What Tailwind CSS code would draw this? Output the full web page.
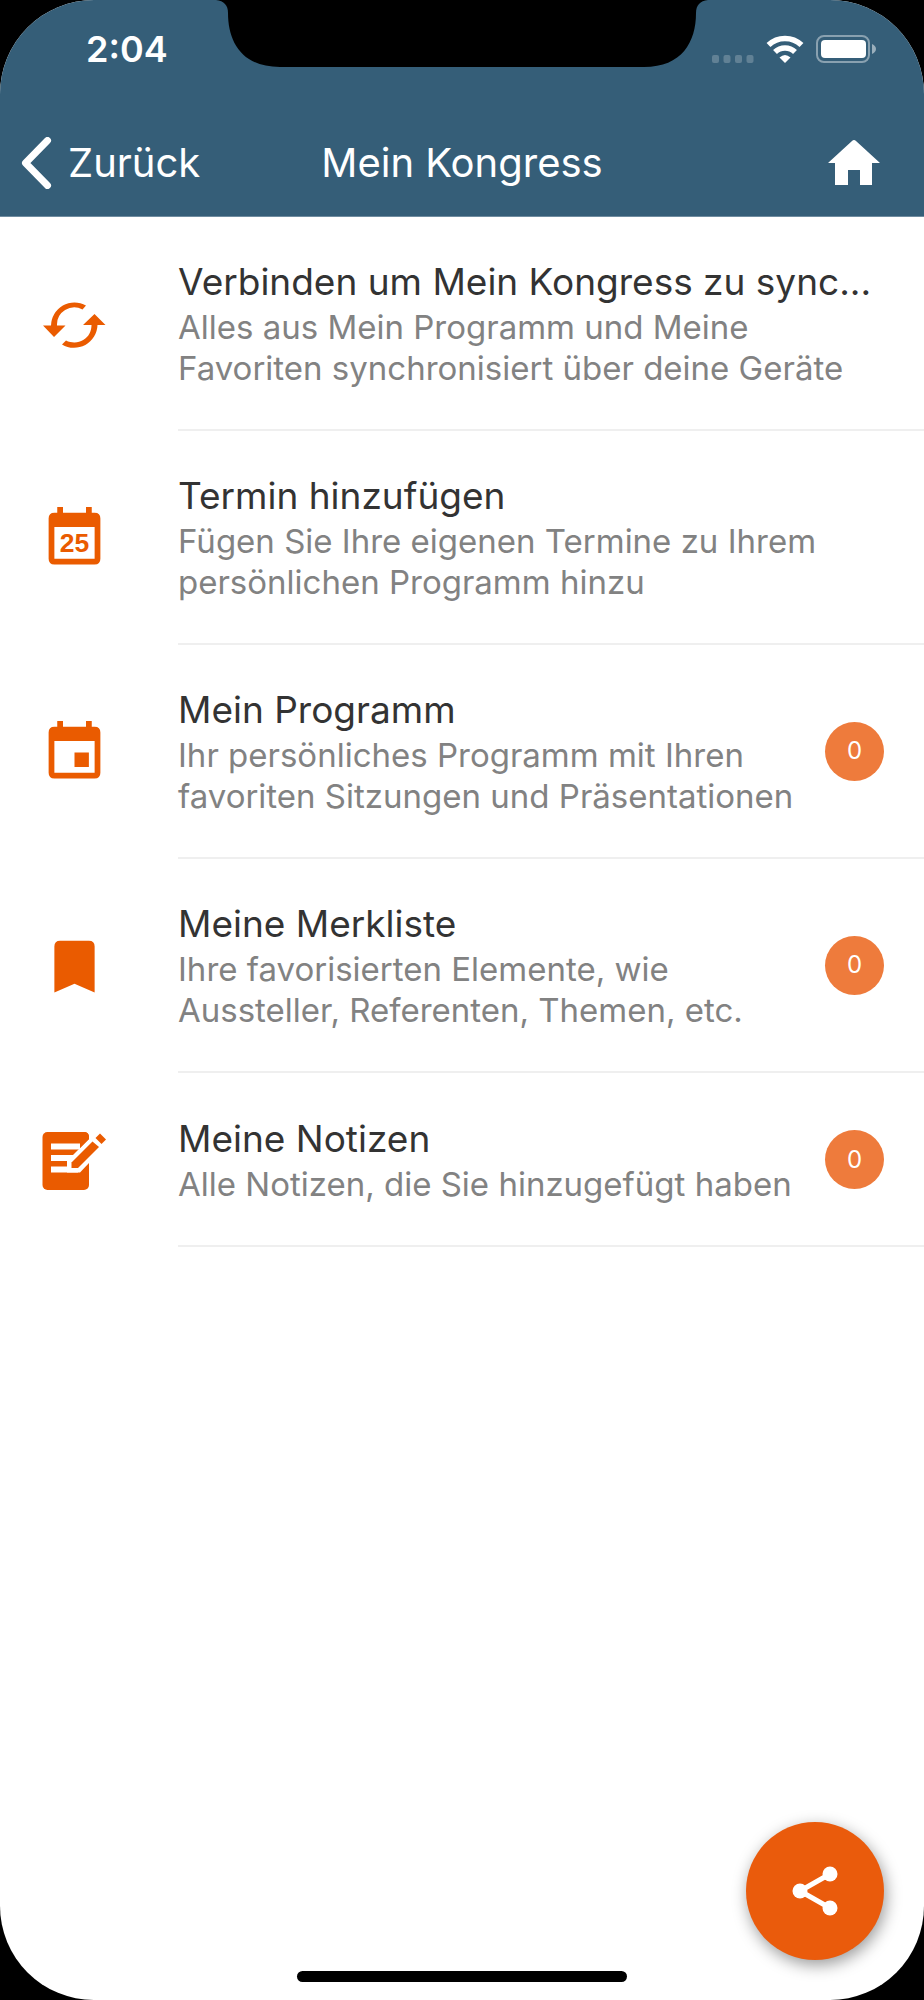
<!DOCTYPE html>
<html lang="de">
<head>
<meta charset="utf-8">
<meta name="viewport" content="width=device-width, initial-scale=1">
<title>Mein Kongress</title>
<script src="https://cdn.jsdelivr.net/npm/@tailwindcss/browser@4"></script>
</head>
<body class="bg-black font-['Inter',sans-serif]">
<div class="relative flex min-h-screen flex-col overflow-hidden rounded-[94px] bg-white">

  <!-- Device notch -->
  <svg class="absolute top-0 left-1/2 h-[68px] w-[492px] -translate-x-1/2" viewBox="0 0 492 68" aria-hidden="true"><path d="M0 0C8 1 12 5 12 13C12 42 26 67 64 67H428C466 67 480 42 480 13C480 5 484 1 492 0Z" fill="#000"/></svg>

  <header class="border-b border-[#6f8ca0] bg-[#355e78] text-white">
    <div class="flex h-[98px] items-center justify-between pr-12 pl-[86px]">
      <time class="text-[36px] leading-[44px] font-semibold">2:04</time>
      <div class="flex items-center gap-3">
        <svg class="h-7 w-[42px]" viewBox="0 0 42 28" fill="#fff" fill-opacity=".22" aria-hidden="true"><rect y="20" width="7" height="8" rx="2"/><rect x="11.500" y="20" width="7" height="8" rx="2"/><rect x="23" y="20" width="7" height="8" rx="2"/><rect x="34.500" y="20" width="7" height="8" rx="2"/></svg>
        <svg class="h-7 w-[38px]" viewBox="0 0 38 28" fill="none" stroke="#fff" stroke-width="5.600" aria-label="WLAN" role="img"><path d="M2.500 10A24 24 0 0 1 35.500 10"/><path d="M9 17A14.500 14.500 0 0 1 29 17"/><path d="M13.500 22.500Q19 17.500 24.500 22.500L19 28Z" fill="#fff" stroke="none"/></svg>
        <svg class="h-7 w-[60px]" viewBox="0 0 60 28" aria-label="Batterie" role="img"><rect x="1" y="1" width="52" height="26" rx="7" fill="none" stroke="#fff" stroke-opacity=".42" stroke-width="2"/><rect x="5" y="5" width="45" height="18" rx="4" fill="#fff"/><path d="M56 9Q60 11 60 14T56 19Z" fill="#fff" fill-opacity=".5"/></svg>
      </div>
    </div>
    <nav class="grid h-[118px] grid-cols-[1fr_auto_1fr] items-center px-[21px] pt-3">
      <a href="#" class="flex items-center gap-4 text-[40px] leading-[48px]">
        <svg class="h-[52px] w-[31px]" viewBox="0 0 31 52" fill="none" stroke="#fff" stroke-width="7" stroke-linecap="round" stroke-linejoin="round" aria-hidden="true"><path d="M26.500 3.500L4.500 26L26.500 48.500"/></svg>
        Zurück
      </a>
      <h1 class="text-[40px] leading-[48px]">Mein Kongress</h1>
      <a href="#" class="mr-[22px] justify-self-end" aria-label="Startseite">
        <svg class="h-[46px] w-[54px]" viewBox="0 0 54 46" fill="#fff" aria-hidden="true"><path d="M27 0Q28 0 29 1L53 23H45V45H33V30H21V45H8V23H1L25 1Q26 0 27 0Z"/></svg>
      </a>
    </nav>
  </header>

  <main class="flex-1">
    <ul class="text-[#828282]">
      <li><a href="#" class="flex">
        <span class="flex w-[178px] shrink-0 items-center pl-10">
          <svg class="size-[69px]" viewBox="0 0 69 69" fill="#ea5b00" aria-hidden="true"><path d="M46 15.500A23.500 23.500 0 0 0 11 35.500H3L14 47L25.500 35.500H17A17.300 17.300 0 0 1 42.500 19.500Z"/><path d="M22 54.500A23.500 23.500 0 0 0 57.500 35H65.500L54.500 24L43 35H51.500A17.300 17.300 0 0 1 26 50.500Z"/></svg>
        </span>
        <span class="min-w-0 flex-1 border-b-2 border-[#efefef] pt-10 pr-10 pb-10">
          <span class="block text-[37px] leading-[50px] whitespace-nowrap text-[#333]">Verbinden um Mein Kongress zu sync...</span>
          <span class="block text-[33px] leading-[41px]">Alles aus Mein Programm und Meine<br>Favoriten synchronisiert über deine Geräte</span>
        </span>
      </a></li>

      <li><a href="#" class="flex">
        <span class="flex w-[178px] shrink-0 items-center pl-10">
          <svg class="size-[69px]" viewBox="0 0 24 24" fill="#ea5b00" aria-hidden="true"><path fill-rule="evenodd" d="M6 1H8V3H16V1H18V3H19Q21 3 21 5V19Q21 21 19 21H5Q3 21 3 19V5Q3 3 5 3H6ZM5 8V19H19V8Z"/><text x="12" y="16.700" text-anchor="middle" font-family="Liberation Sans" font-weight="bold" font-size="9.200">25</text></svg>
        </span>
        <span class="min-w-0 flex-1 border-b-2 border-[#efefef] pt-10 pr-10 pb-10">
          <span class="block text-[37px] leading-[50px] whitespace-nowrap text-[#333]">Termin hinzufügen</span>
          <span class="block text-[33px] leading-[41px]">Fügen Sie Ihre eigenen Termine zu Ihrem<br>persönlichen Programm hinzu</span>
        </span>
      </a></li>

      <li><a href="#" class="flex">
        <span class="flex w-[178px] shrink-0 items-center pl-10">
          <svg class="size-[69px]" viewBox="0 0 24 24" fill="#ea5b00" aria-hidden="true"><path fill-rule="evenodd" d="M6 1H8V3H16V1H18V3H19Q21 3 21 5V19Q21 21 19 21H5Q3 21 3 19V5Q3 3 5 3H6ZM5 8V19H19V8ZM12 12H17V17H12Z"/></svg>
        </span>
        <span class="flex min-w-0 flex-1 items-center border-b-2 border-[#efefef] pt-10 pr-10 pb-10">
          <span class="min-w-0 flex-1">
            <span class="block text-[37px] leading-[50px] whitespace-nowrap text-[#333]">Mein Programm</span>
            <span class="block text-[33px] leading-[41px] whitespace-nowrap">Ihr persönliches Programm mit Ihren<br>favoriten Sitzungen und Präsentationen</span>
          </span>
          <span class="flex size-[59px] shrink-0 items-center justify-center rounded-full bg-[#ee7b3c] text-2xl text-white">0</span>
        </span>
      </a></li>

      <li><a href="#" class="flex">
        <span class="flex w-[178px] shrink-0 items-center pl-10">
          <svg class="size-[69px]" viewBox="0 0 24 24" fill="#ea5b00" aria-hidden="true"><path d="M17 3H7Q5 3 5 5V21L12 18L19 21V5Q19 3 17 3Z"/></svg>
        </span>
        <span class="flex min-w-0 flex-1 items-center border-b-2 border-[#efefef] pt-10 pr-10 pb-10">
          <span class="min-w-0 flex-1">
            <span class="block text-[37px] leading-[50px] whitespace-nowrap text-[#333]">Meine Merkliste</span>
            <span class="block text-[33px] leading-[41px] whitespace-nowrap">Ihre favorisierten Elemente, wie<br>Aussteller, Referenten, Themen, etc.</span>
          </span>
          <span class="flex size-[59px] shrink-0 items-center justify-center rounded-full bg-[#ee7b3c] text-2xl text-white">0</span>
        </span>
      </a></li>

      <li><a href="#" class="flex">
        <span class="flex w-[178px] shrink-0 items-center pl-10">
          <svg class="size-[69px]" viewBox="0 0 69 69" aria-hidden="true"><rect x="2.500" y="6" width="46.500" height="58" rx="5" fill="#ea5b00"/><path d="M11 20.500H40M11 32H34M11 43.500H38" stroke="#fff" stroke-width="6" fill="none"/><path d="M27 35L53 9L67 18L40 46.500H27Z" fill="#fff"/><path d="M49 8V22H60V6H49Z" fill="#fff"/><path d="M31.500 36.500L52.500 15.500L59 21L38 42H31.500Z" fill="#ea5b00"/><path d="M55.500 12L60 7.500L66 13.500L61.500 18Z" fill="#ea5b00"/><path d="M44 6Q49 6 49 11V13L40 22L40 17.500Z" fill="#ea5b00"/></svg>
        </span>
        <span class="flex min-w-0 flex-1 items-center border-b-2 border-[#efefef] pt-[41px] pr-10 pb-10">
          <span class="min-w-0 flex-1">
            <span class="block text-[37px] leading-[50px] whitespace-nowrap text-[#333]">Meine Notizen</span>
            <span class="block text-[33px] leading-[41px] whitespace-nowrap">Alle Notizen, die Sie hinzugefügt haben</span>
          </span>
          <span class="flex size-[59px] shrink-0 items-center justify-center rounded-full bg-[#ee7b3c] text-2xl text-white">0</span>
        </span>
      </a></li>
    </ul>
  </main>

  <button type="button" aria-label="Teilen" class="absolute right-10 bottom-10 flex size-[138px] items-center justify-center rounded-full bg-[#ea5b0c] shadow-[2px_5px_16px_rgba(0,0,0,0.4)]">
    <svg class="h-[50px] w-[46px]" viewBox="0 0 46 50" fill="#fff" aria-hidden="true"><path d="M38 8L8 25L38 42" fill="none" stroke="#fff" stroke-width="5"/><circle cx="38" cy="8" r="7.500"/><circle cx="8" cy="25" r="7.500"/><circle cx="38" cy="42" r="7.500"/></svg>
  </button>
  <div class="absolute bottom-[18px] left-1/2 h-[11px] w-[330px] -translate-x-1/2 rounded-full bg-black"></div>
</div>
</body>
</html>
